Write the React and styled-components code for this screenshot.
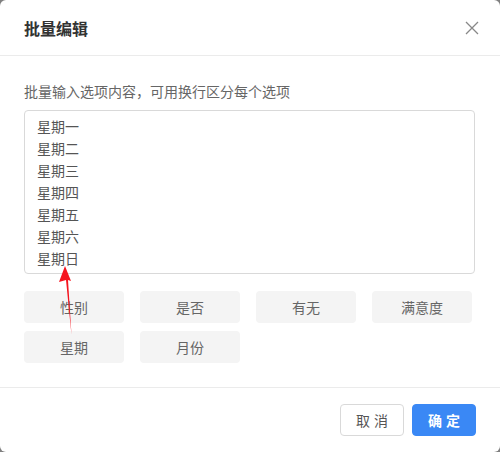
import React from "react";
import styled, { createGlobalStyle } from "styled-components";

const GlobalStyle = createGlobalStyle`
  html, body {
    margin: 0;
    padding: 0;
    background: #808080;
  }
  body {
    font-family: "Noto Sans CJK SC", "Liberation Sans", sans-serif;
  }
`;

const Dialog = styled.div`
  position: relative;
  width: 500px;
  height: 452px;
  background: #fff;
  border-radius: 6px;
  overflow: hidden;
  display: flex;
  flex-direction: column;
`;

const Header = styled.header`
  height: 57px;
  box-sizing: border-box;
  padding: 0 24px;
  display: flex;
  align-items: center;
  justify-content: space-between;
  border-bottom: 1px solid #ebebeb;
`;

const Title = styled.h1`
  margin: 0;
  font-size: 16px;
  font-weight: 700;
  color: #333;
`;

const CloseButton = styled.button`
  border: 0;
  background: none;
  padding: 0;
  margin-right: -6px;
  width: 20px;
  height: 20px;
  display: flex;
  align-items: center;
  justify-content: center;
  cursor: pointer;
`;

const Body = styled.section`
  flex: 1;
  padding: 24px 24px 24px;
  display: flex;
  flex-direction: column;
`;

const Hint = styled.p`
  margin: 0 0 8px;
  font-size: 14px;
  line-height: 22px;
  color: #666;
`;

const Options = styled.textarea`
  box-sizing: border-box;
  width: 451px;
  height: 164px;
  padding: 4px 12px;
  border: 1px solid #d9d9d9;
  border-radius: 4px;
  font-family: inherit;
  font-size: 14px;
  line-height: 22px;
  color: #555;
  resize: none;
  outline: none;
  overflow: hidden;
`;

const Presets = styled.div`
  margin-top: 17px;
  display: grid;
  grid-template-columns: repeat(4, 100px);
  column-gap: 16px;
  row-gap: 8px;
`;

const Preset = styled.button`
  height: 32px;
  border: 0;
  border-radius: 4px;
  background: #f4f4f4;
  font-family: inherit;
  font-size: 14px;
  color: #666;
  cursor: pointer;
`;

const Footer = styled.footer`
  border-top: 1px solid #ebebeb;
  padding: 16px 24px 16px;
  display: flex;
  justify-content: flex-end;
  gap: 8px;
`;

const ActionButton = styled.button`
  width: 64px;
  height: 32px;
  box-sizing: border-box;
  border-radius: 4px;
  font-family: inherit;
  font-size: 14px;
  letter-spacing: 4px;
  text-indent: 4px;
  cursor: pointer;
  border: 1px solid ${(p) => (p.$primary ? "#3a88f5" : "#d9d9d9")};
  background: ${(p) => (p.$primary ? "#3a88f5" : "#fff")};
  color: ${(p) => (p.$primary ? "#fff" : "#555")};
  font-weight: ${(p) => (p.$primary ? 700 : 400)};
`;

const Annotation = styled.svg`
  position: absolute;
  left: 0;
  top: 0;
  pointer-events: none;
`;

const days = ["星期一", "星期二", "星期三", "星期四", "星期五", "星期六", "星期日"];
const presets = ["性别", "是否", "有无", "满意度", "星期", "月份"];

export default function App() {
  return (
    <>
      <GlobalStyle />
      <Dialog>
        <Header>
          <Title>批量编辑</Title>
          <CloseButton aria-label="关闭">
            <svg width="16" height="16" viewBox="0 0 16 16">
              <path d="M2 2 L14 14 M14 2 L2 14" stroke="#888" strokeWidth="1.3" fill="none" />
            </svg>
          </CloseButton>
        </Header>
        <Body>
          <Hint>批量输入选项内容，可用换行区分每个选项</Hint>
          <Options defaultValue={days.join("\n")} />
          <Presets>
            {presets.map((p) => (
              <Preset key={p}>{p}</Preset>
            ))}
          </Presets>
        </Body>
        <Footer>
          <ActionButton>取消</ActionButton>
          <ActionButton $primary>确定</ActionButton>
        </Footer>
        <Annotation width="500" height="452" viewBox="0 0 500 452">
          <polygon
            points="65,266 71,281 68,280 71.5,335 66,280 59,282"
            fill="#f5141e"
          />
        </Annotation>
      </Dialog>
    </>
  );
}
